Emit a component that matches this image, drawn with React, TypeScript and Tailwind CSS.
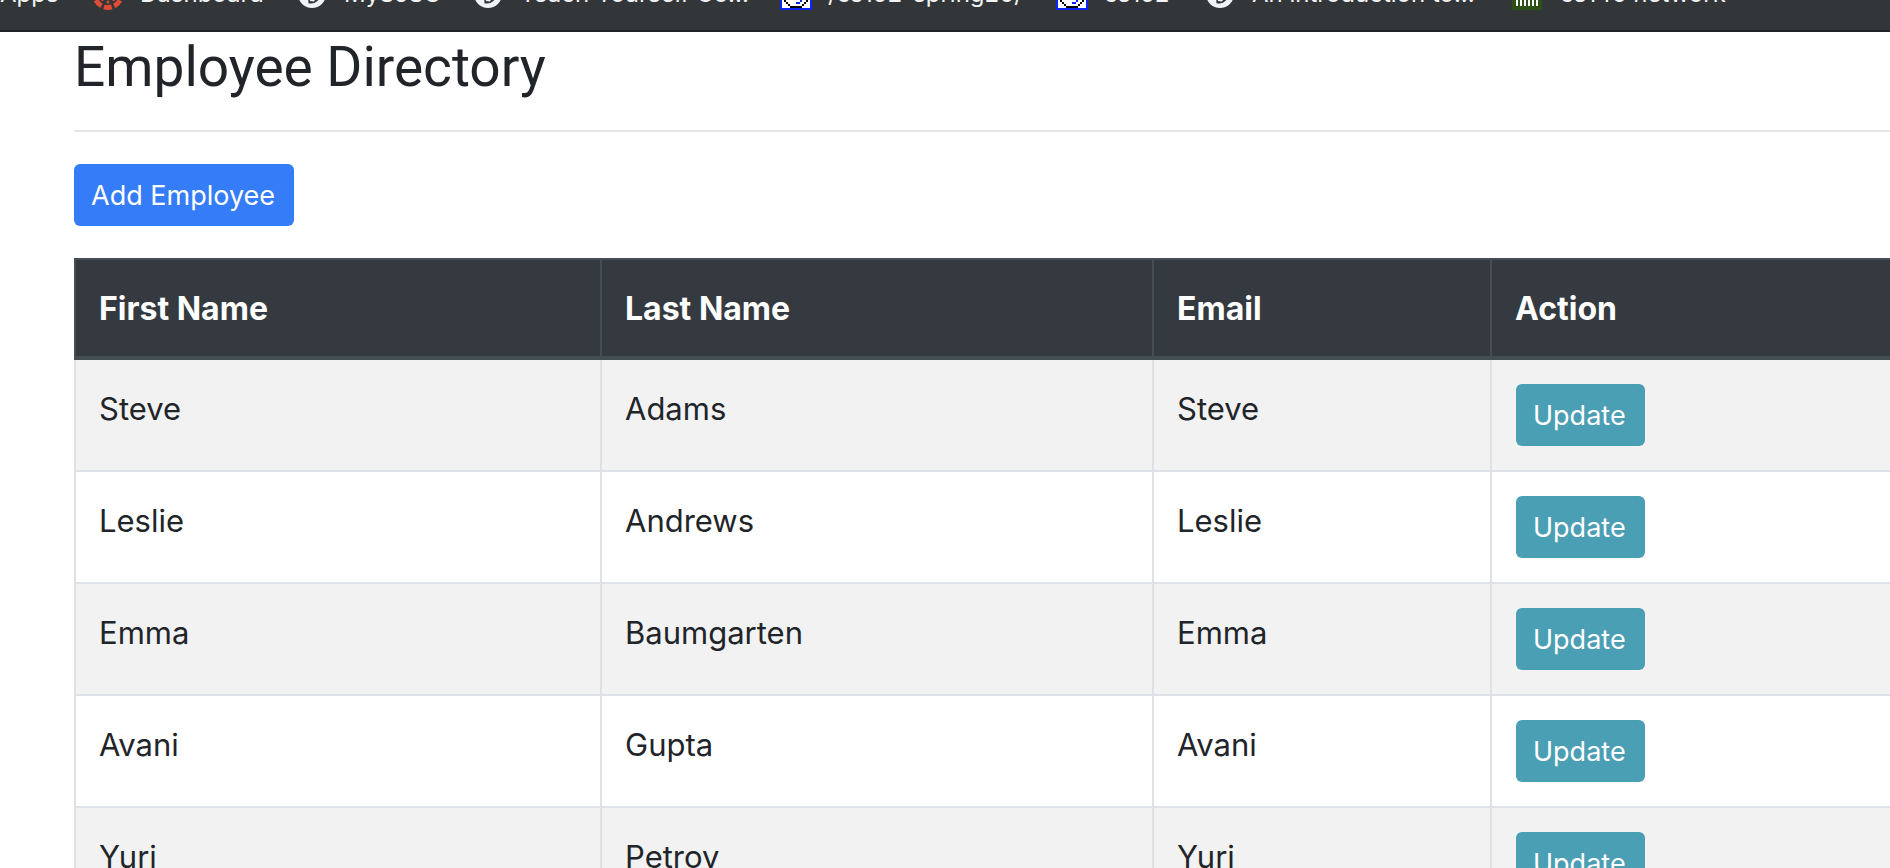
import type { ReactNode } from "react";

function WheelIcon() {
  return (
    <svg width="32" height="32" viewBox="0 0 32 32" className="shrink-0" aria-hidden="true">
      <circle cx="16" cy="16" r="13.5" fill="none" stroke="#e04b35" strokeWidth="5" strokeDasharray="8 2.603" strokeDashoffset="4" />
      <g fill="#e04b35">
        <circle cx="16" cy="24" r="1.5" />
        <circle cx="21.6" cy="21.6" r="1.5" />
        <circle cx="10.4" cy="21.6" r="1.5" />
      </g>
    </svg>
  );
}

function GlobeIcon() {
  return (
    <svg width="32" height="32" viewBox="0 0 32 32" className="shrink-0" aria-hidden="true">
      <circle cx="16" cy="16" r="14" fill="#f1f3f4" />
      <path d="M8 8 L12 18 L12.5 25.2 Q19 27 24 20 L24 8 Z" fill="#323639" />
      <path d="M13 18 L14 23 L18 23.4 L21 19 Z" fill="#f1f3f4" />
    </svg>
  );
}

function FaceIcon() {
  return (
    <svg width="32" height="32" viewBox="0 0 32 32" className="shrink-0" shapeRendering="crispEdges" aria-hidden="true">
      <rect x="1" y="1" width="30" height="30" fill="#fff" stroke="#0b24fb" strokeWidth="2" />
      <path d="M10 28h12v2h-12zM8 26h2v2h-2zM22 26h2v2h-2zM6 24h2v2h-2zM24 24h2v2h-2zM4 20h2v4h-2zM26 20h2v4h-2z" fill="#000" />
      <path d="M16 24h4v2h-4zM20 20h2v4h-2z" fill="#0b24fb" />
    </svg>
  );
}

function BarsIcon() {
  return (
    <svg width="32" height="32" viewBox="0 0 32 32" className="shrink-0" shapeRendering="crispEdges" aria-hidden="true">
      <rect width="30" height="32" fill="#2d5016" />
      <path d="M5 14v14M9 14v14M13 14v14M17 14v14M21 14v14M25 14v14" stroke="#fff" strokeWidth="2" />
    </svg>
  );
}

type Bookmark = { label: string; icon?: ReactNode; width: string };

const bookmarks: Bookmark[] = [
  { label: "Apps", width: "w-[92px]" },
  { label: "Dashboard", icon: <WheelIcon />, width: "w-[204px]" },
  { label: "MySJSU", icon: <GlobeIcon />, width: "w-[176px]" },
  { label: "Teach Yourself Co...", icon: <GlobeIcon />, width: "w-[308px]" },
  { label: "/cs152-spring20/", icon: <FaceIcon />, width: "w-[276px]" },
  { label: "cs152", icon: <FaceIcon />, width: "w-[148px]" },
  { label: "An introduction to...", icon: <GlobeIcon />, width: "w-[308px]" },
  { label: "cs146 network", icon: <BarsIcon />, width: "w-[232px]" },
];

const employees = [
  { first: "Steve", last: "Adams" },
  { first: "Leslie", last: "Andrews" },
  { first: "Emma", last: "Baumgarten" },
  { first: "Avani", last: "Gupta" },
  { first: "Yuri", last: "Petrov" },
];

const button = "rounded-md pl-[17px] pr-[19px] pt-0.5 text-[27px] leading-[60px] text-white";
const cell = "border-2 border-[#dee2e6] pl-[23px] pr-6 pt-[25px] pb-[23px]";

export default function App() {
  return (
    <div className="h-screen overflow-hidden bg-white font-['Inter','Liberation_Sans',sans-serif] text-[#212529]">
      <nav className="flex h-8 items-end overflow-hidden border-b-2 border-[#202124] bg-[#323639] pb-5 text-2xl text-[#f1f3f4]">
        {bookmarks.map((b) => (
          <a key={b.label} href="#" className={`flex h-8 shrink-0 items-center gap-4 whitespace-nowrap ${b.width}`}>
            {b.icon}
            {b.label}
          </a>
        ))}
      </nav>
      <main className="pl-[74px]">
        <h1 className="font-['Roboto','Inter',sans-serif] text-[55px] leading-[70px]">Employee Directory</h1>
        <hr className="mt-7 border-t-2 border-[#e5e5e5]" />
        <button type="button" className={`mt-8 block bg-[#347cf8] ${button}`}>Add Employee</button>
        <table className="mt-8 w-full table-fixed border-collapse text-left text-[31px] leading-[48px]">
          <colgroup>
            <col className="w-[526px]" />
            <col className="w-[552px]" />
            <col className="w-[338px]" />
            <col />
          </colgroup>
          <thead className="bg-[#343a40] text-[32px] text-white">
            <tr>
              {["First Name", "Last Name", "Email", "Action"].map((h) => (
                <th key={h} scope="col" className="border-2 border-b-4 border-[#454d55] pl-[23px] pr-6 pt-[25px] pb-[23px] font-bold last:border-r-0">{h}</th>
              ))}
            </tr>
          </thead>
          <tbody>
            {employees.map((e) => (
              <tr key={e.last} className="align-top odd:bg-[#f2f2f2]">
                <td className={cell}>{e.first}</td>
                <td className={cell}>{e.last}</td>
                <td className={cell}>{e.first}</td>
                <td className="border-2 border-r-0 border-[#dee2e6] p-6">
                  <button type="button" className={`block bg-[#4a9fb5] ${button}`}>Update</button>
                </td>
              </tr>
            ))}
          </tbody>
        </table>
      </main>
    </div>
  );
}
